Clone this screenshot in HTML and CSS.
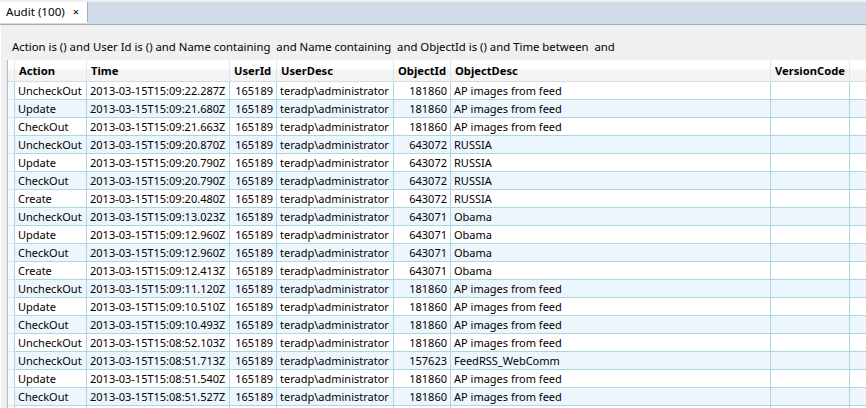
FILE: index.html
```html
<!DOCTYPE html>
<html lang="en">
<head>
<meta charset="UTF-8">
<title>Audit</title>
<link rel="stylesheet" href="styles.css">
</head>
<body>

<div class="tabstrip">
  <div class="tab">Audit (100)<span class="tab-close">×</span></div>
</div>

<div class="panel">
  <div class="filter">Action is () and User Id is () and Name containing  and Name containing  and ObjectId is () and Time between  and</div>

  <div class="grid">
    <table>
      <thead>
        <tr>
          <th class="rowhead"></th>
          <th class="c-action">Action</th>
          <th class="c-time">Time</th>
          <th class="c-user">UserId</th>
          <th class="c-udesc">UserDesc</th>
          <th class="c-obj">ObjectId</th>
          <th class="c-odesc">ObjectDesc</th>
          <th class="c-ver">VersionCode</th>
          <th class="c-fill"></th>
        </tr>
      </thead>
      <tbody id="rows"></tbody>
    </table>
  </div>
</div>

<script>
  var data = [
    ['UncheckOut', '2013-03-15T15:09:22.287Z', '181860', 'AP images from feed'],
    ['Update', '2013-03-15T15:09:21.680Z', '181860', 'AP images from feed'],
    ['CheckOut', '2013-03-15T15:09:21.663Z', '181860', 'AP images from feed'],
    ['UncheckOut', '2013-03-15T15:09:20.870Z', '643072', 'RUSSIA'],
    ['Update', '2013-03-15T15:09:20.790Z', '643072', 'RUSSIA'],
    ['CheckOut', '2013-03-15T15:09:20.790Z', '643072', 'RUSSIA'],
    ['Create', '2013-03-15T15:09:20.480Z', '643072', 'RUSSIA'],
    ['UncheckOut', '2013-03-15T15:09:13.023Z', '643071', 'Obama'],
    ['Update', '2013-03-15T15:09:12.960Z', '643071', 'Obama'],
    ['CheckOut', '2013-03-15T15:09:12.960Z', '643071', 'Obama'],
    ['Create', '2013-03-15T15:09:12.413Z', '643071', 'Obama'],
    ['UncheckOut', '2013-03-15T15:09:11.120Z', '181860', 'AP images from feed'],
    ['Update', '2013-03-15T15:09:10.510Z', '181860', 'AP images from feed'],
    ['CheckOut', '2013-03-15T15:09:10.493Z', '181860', 'AP images from feed'],
    ['UncheckOut', '2013-03-15T15:08:52.103Z', '181860', 'AP images from feed'],
    ['UncheckOut', '2013-03-15T15:08:51.713Z', '157623', 'FeedRSS_WebComm'],
    ['Update', '2013-03-15T15:08:51.540Z', '181860', 'AP images from feed'],
    ['CheckOut', '2013-03-15T15:08:51.527Z', '181860', 'AP images from feed'],
    ['', '', '', '']
  ];

  var html = '';
  for (var i = 0; i < data.length; i++) {
    var r = data[i];
    var last = r[0] === '';
    html += '<tr>' +
      '<td class="rowhead"></td>' +
      '<td>' + r[0] + '</td>' +
      '<td>' + r[1] + '</td>' +
      '<td class="num">' + (last ? '' : '165189') + '</td>' +
      '<td>' + (last ? '' : 'teradp\\administrator') + '</td>' +
      '<td class="num">' + r[2] + '</td>' +
      '<td>' + r[3] + '</td>' +
      '<td></td>' +
      '<td></td>' +
      '</tr>';
  }
  document.getElementById('rows').innerHTML = html;
</script>
</body>
</html>
```

FILE: styles.css
```css
body {
  margin: 0;
  width: 866px;
  height: 408px;
  overflow: hidden;
  background-color: #f0f0f0;
  font-family: "Noto Sans", "Open Sans", sans-serif;
  font-size: 11px;
  color: #000;
}
.tabstrip {
  height: 22px;
  background-color: #cfdbe6;
  border-bottom: 1px solid #a3adb7;
}
.tab {
  box-sizing: border-box;
  width: 88px;
  height: 21px;
  margin-top: 2px;
  padding-left: 6px;
  line-height: 19px;
  font-size: 11.6px;
  background-color: #fff;
  border-right: 1px solid #a3adb7;
  border-bottom: 1px solid #fff;
}
.tab-close {
  margin-left: 8px;
  font-size: 11px;
}
.panel {
  border-left: 1px solid #fff;
}
.filter {
  padding: 14px 0 0 11px;
  height: 21px;
  line-height: 15px;
  font-size: 11.35px;
  white-space: pre;
}
.grid {
  margin-left: 6px;
  border-left: 1px solid #a9bcc9;
  background-color: #fff;
}
table {
  table-layout: fixed;
  border-collapse: separate;
  border-spacing: 0;
  width: 942px;
}
th {
  box-sizing: border-box;
  height: 22px;
  padding: 0 0 0 4px;
  text-align: left;
  font-weight: bold;
  font-size: 11.2px;
  white-space: nowrap;
  background: linear-gradient(#ffffff 0, #ffffff 45%, #f3f3f3 46%, #f3f3f3 100%);
  border-right: 1px solid #e3e6e8;
  border-bottom: 1px solid #d5dbe0;
}
th.rowhead { width: 7px; padding: 0; }
th.c-action { width: 72px; }
th.c-time { width: 143px; }
th.c-user { width: 47px; }
th.c-udesc { width: 117px; }
th.c-obj { width: 57px; }
th.c-odesc { width: 320px; }
th.c-ver { width: 79px; }
th.c-fill { width: 100px; border-right: none; }
td {
  height: 17px;
  padding: 0 3px;
  line-height: 17px;
  white-space: nowrap;
  overflow: hidden;
  border-right: 1px solid #add6e3;
  border-bottom: 1px solid #add6e3;
}
tbody tr:nth-child(even) td {
  background-color: #eef6fd;
}
td.rowhead,
tbody tr:nth-child(even) td.rowhead {
  padding: 0;
  background-color: #f7f9fa;
  border-bottom-color: #e3e8eb;
}
td.num {
  text-align: right;
}
```
